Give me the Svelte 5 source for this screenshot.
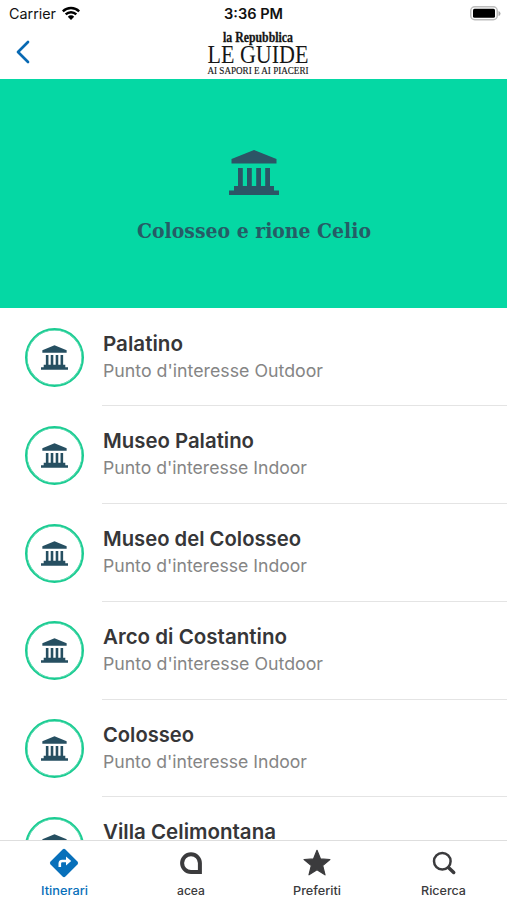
<script>
  const places = [
    { name: 'Palatino', type: 'Outdoor', width: 80 },
    { name: 'Museo Palatino', type: 'Indoor', width: 151 },
    { name: 'Museo del Colosseo', type: 'Indoor', width: 198 },
    { name: 'Arco di Costantino', type: 'Outdoor', width: 184 },
    { name: 'Colosseo', type: 'Indoor', width: 91 },
    { name: 'Villa Celimontana', type: 'Outdoor', width: 173 }
  ];

  const tabs = [
    { id: 'itinerari', label: 'Itinerari', width: 47 },
    { id: 'acea', label: 'acea', width: 28 },
    { id: 'preferiti', label: 'Preferiti', width: 48 },
    { id: 'ricerca', label: 'Ricerca', width: 45 }
  ];

  let active = $state('itinerari');
</script>

{#snippet museum()}
  <svg class="museum" viewBox="0 0 50 45" aria-hidden="true">
    <path d="M25 0 47.500 9v4.500h-45V9zM9 18h4.800v18h-4.800zM18 18h4.800v18h-4.800zM27.200 18h4.800v18h-4.800zM36.200 18h4.800v18h-4.800zM5 36h40v4.500h5V45H0v-4.500h5z" />
  </svg>
{/snippet}

{#snippet line(text, width, height, baseline)}
  <svg class="line" {width} {height}>
    <text x="0" y={baseline} textLength={width} lengthAdjust="spacingAndGlyphs">{text}</text>
  </svg>
{/snippet}

<div class="app">
  <header>
    <div class="status">
      <div class="carrier">
        {@render line('Carrier', 47, 20, 13)}
        <svg width="18" height="14" viewBox="0 0 18 14">
          <g fill="none" stroke="#000" stroke-width="2.400">
            <path d="M.8 5.400a11.600 11.600 0 0 1 16.400 0M3.700 8.400a7.500 7.500 0 0 1 10.600 0" />
          </g>
          <path d="M5.800 10.700a4.500 4.500 0 0 1 6.400 0L9 14z" />
        </svg>
      </div>
      <div class="time">{@render line('3:36 PM', 59, 20, 13)}</div>
      <svg class="battery" width="31" height="15" viewBox="0 0 31 15">
        <rect x=".75" y=".75" width="26.500" height="13" rx="4" fill="#fff" stroke="#bdbdbd" stroke-width="1.500" />
        <rect x="3" y="2.800" width="22" height="9" rx="1.500" />
        <path d="M28.500 5q2 .5 2 2.500t-2 2.500z" fill="#aaa" />
      </svg>
    </div>
    <div class="nav">
      <button class="back" aria-label="Indietro">
        <svg width="14" height="24" viewBox="0 0 14 24">
          <path d="M12 2 2 12l10 10" fill="none" stroke="#0869b3" stroke-width="2.700" stroke-linecap="round" stroke-linejoin="round" />
        </svg>
      </button>
      <svg class="logo" width="104" height="50" viewBox="0 0 104 50">
        <text class="heavy" x="17" y="13.500" font-size="15" textLength="70" lengthAdjust="spacingAndGlyphs">la Repubblica</text>
        <text x="1.500" y="34.500" font-size="25" textLength="101" lengthAdjust="spacingAndGlyphs">LE GUIDE</text>
        <text class="small" x="1.500" y="46" font-size="9.500" textLength="101" lengthAdjust="spacingAndGlyphs">AI SAPORI E AI PIACERI</text>
      </svg>
    </div>
  </header>

  <section class="hero">
    {@render museum()}
    <h1>{@render line('Colosseo e rione Celio', 234, 28, 20)}</h1>
  </section>

  <main>
    {#each places as place}
      <article>
        <div class="badge">{@render museum()}</div>
        <div class="info">
          <h2>{@render line(place.name, place.width, 28, 21)}</h2>
          <p>{@render line(`Punto d'interesse ${place.type}`, place.type === 'Outdoor' ? 220 : 204, 26, 19)}</p>
        </div>
      </article>
    {/each}
  </main>

  <nav>
    {#each tabs as tab}
      <button class="tab" class:active={active === tab.id} onclick={() => (active = tab.id)}>
        <svg class="icon" width="30" height="30" viewBox="0 0 30 30">
          {#if tab.id === 'itinerari'}
            <rect x="4.500" y="4.500" width="21" height="21" rx="2" transform="rotate(45 15 15)" fill="currentColor" />
            <path d="M10.800 19v-3.500q0-2.500 2.500-2.500H18" fill="none" stroke="#fff" stroke-width="2.600" />
            <path d="m17 8.500 5.200 4.500-5.200 4.500z" fill="#fff" />
          {:else if tab.id === 'acea'}
            <path d="M15 6.200A8.900 8.900 0 1 0 15 24h8.900V15.100A8.900 8.900 0 0 0 15 6.200z" fill="none" stroke="currentColor" stroke-width="4" />
          {:else if tab.id === 'preferiti'}
            <path d="m15 2.300 3.500 8.600 9.400.6-7.200 6.100 2.300 9.200-8-5-8 5 2.300-9.200-7.200-6.100 9.400-.6z" fill="currentColor" stroke="currentColor" stroke-width="1.200" stroke-linejoin="round" />
          {:else}
            <circle cx="13.300" cy="13.200" r="8.300" fill="none" stroke="currentColor" stroke-width="2.500" />
            <path d="m19.700 19.700 5 4.800" stroke="currentColor" stroke-width="3.500" stroke-linecap="round" />
          {/if}
        </svg>
        {@render line(tab.label, tab.width, 18, 13)}
      </button>
    {/each}
  </nav>
</div>

<style>
  :global(body) {
    margin: 0;
    background: #fff;
  }

  .app {
    width: 507px;
    height: 900px;
    display: flex;
    flex-direction: column;
    overflow: hidden;
    background: #fff;
    color: #363638;
    font-family: Inter, 'Liberation Sans', sans-serif;
  }

  svg {
    display: block;
    flex-shrink: 0;
  }

  .line {
    overflow: visible;
    fill: currentColor;
  }

  button {
    border: 0;
    padding: 0;
    background: none;
    font-family: inherit;
  }

  header {
    height: 79px;
    flex-shrink: 0;
  }

  .status {
    height: 28px;
    display: grid;
    grid-template-columns: 1fr 59px 1fr;
    align-items: start;
    color: #111;
    font-size: 14px;
  }

  .carrier {
    display: flex;
    gap: 6px;
    padding: 6px 0 0 9px;
  }

  .time {
    padding-top: 6px;
    font-weight: 600;
  }

  .battery {
    justify-self: end;
    margin: 6px 6px 0 0;
  }

  .nav {
    height: 50px;
    display: grid;
    grid-template-columns: 206px 104px 1fr;
  }

  .back {
    justify-self: start;
    align-self: start;
    margin: 12px 0 0 16px;
  }

  .logo {
    overflow: visible;
    fill: #161616;
    font-family: 'Liberation Serif', serif;
  }

  .heavy {
    font-weight: bold;
    stroke: #161616;
    stroke-width: 0.3;
  }

  .small {
    stroke: #161616;
    stroke-width: 0.15;
  }

  .hero {
    height: 229px;
    flex-shrink: 0;
    display: flex;
    flex-direction: column;
    align-items: center;
    box-sizing: border-box;
    padding-top: 71px;
    background: #05d8a4;
    color: #255c66;
  }

  .museum {
    width: 50px;
    height: 45px;
    fill: #2c5566;
  }

  h1,
  h2,
  p {
    margin: 0;
  }

  h1 {
    margin-top: 23px;
    font-family: 'DejaVu Serif', serif;
    font-size: 20px;
    font-weight: bold;
  }

  main {
    flex: 1;
    min-height: 0;
    box-sizing: border-box;
    padding-top: 0.5px;
    overflow: hidden;
  }

  article {
    height: 97.75px;
    display: flex;
    gap: 18px;
    padding-left: 25px;
  }

  .badge {
    width: 59px;
    height: 59px;
    box-sizing: border-box;
    margin-top: 19.5px;
    display: flex;
    align-items: center;
    justify-content: center;
    border: 2px solid #1bcc92;
    border-radius: 50%;
    box-shadow: inset 0 0 0 0.5px #1bcc92;
  }

  .badge .museum {
    width: 27px;
    height: 25px;
    fill: #264f61;
  }

  .info {
    flex: 1;
    box-sizing: border-box;
    padding-top: 21.1px;
    border-bottom: 1px solid #e4e4e4;
  }

  .info .line {
    margin-left: 1px;
  }

  h2 {
    font-size: 20.5px;
    font-weight: 600;
  }

  p {
    color: #858585;
    font-size: 17.5px;
  }

  nav {
    height: 60px;
    flex-shrink: 0;
    box-sizing: border-box;
    display: grid;
    grid-template-columns: repeat(4, 126.5px);
    border-top: 1px solid #dedede;
    background: #fff;
  }

  .tab {
    display: flex;
    flex-direction: column;
    align-items: center;
    padding-top: 7px;
    padding-left: 2px;
    gap: 4px;
    color: #3b3b3d;
    font-size: 12px;
    font-weight: 500;
  }

  .tab.active {
    color: #0870ba;
  }
</style>
